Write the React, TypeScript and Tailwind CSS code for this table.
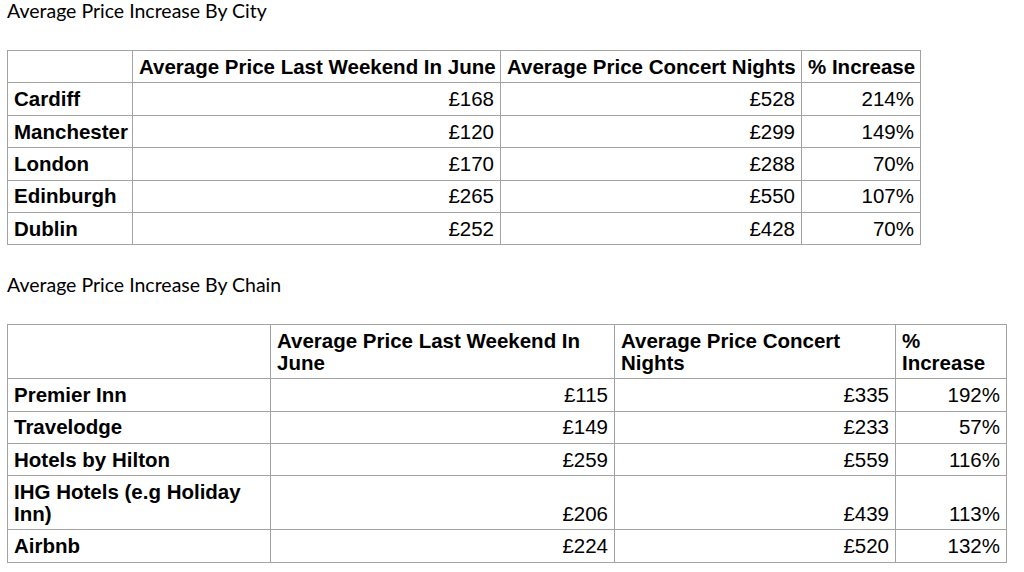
const cities = [
  { name: "Cardiff", june: "£168", concert: "£528", pct: "214%" },
  { name: "Manchester", june: "£120", concert: "£299", pct: "149%" },
  { name: "London", june: "£170", concert: "£288", pct: "70%" },
  { name: "Edinburgh", june: "£265", concert: "£550", pct: "107%" },
  { name: "Dublin", june: "£252", concert: "£428", pct: "70%" },
];

const chains = [
  { name: "Premier Inn", june: "£115", concert: "£335", pct: "192%" },
  { name: "Travelodge", june: "£149", concert: "£233", pct: "57%" },
  { name: "Hotels by Hilton", june: "£259", concert: "£559", pct: "116%" },
  { name: "IHG Hotels (e.g Holiday Inn)", june: "£206", concert: "£439", pct: "113%" },
  { name: "Airbnb", june: "£224", concert: "£520", pct: "132%" },
];

const cell = "border border-[#a3a3a3] px-[6px] py-[4.9px] leading-[21.6px] align-bottom";
const title = "text-[19.5px] leading-[22px] text-black font-['Lato','Carlito',sans-serif]";
const tableFont = "text-[20.5px] font-['Liberation_Sans',Arial,sans-serif]";

export default function App() {
  return (
    <div className="min-h-[572px] bg-white pl-[7px] text-black">
      <p className={title}>Average Price Increase By City</p>

      <table className={`mt-[28px] w-[913px] table-fixed border-collapse ${tableFont}`}>
        <colgroup>
          <col className="w-[125px]" />
          <col className="w-[368px]" />
          <col className="w-[301px]" />
          <col className="w-[119px]" />
        </colgroup>
        <thead>
          <tr className="font-bold">
            <th className={cell}></th>
            <th className={`${cell} text-left whitespace-nowrap`}>Average Price Last Weekend In June</th>
            <th className={`${cell} text-left whitespace-nowrap`}>Average Price Concert Nights</th>
            <th className={`${cell} text-left whitespace-nowrap`}>% Increase</th>
          </tr>
        </thead>
        <tbody>
          {cities.map((c) => (
            <tr key={c.name}>
              <td className={`${cell} font-bold whitespace-nowrap`}>{c.name}</td>
              <td className={`${cell} text-right`}>{c.june}</td>
              <td className={`${cell} text-right`}>{c.concert}</td>
              <td className={`${cell} text-right`}>{c.pct}</td>
            </tr>
          ))}
        </tbody>
      </table>

      <p className={`${title} mt-[29px]`}>Average Price Increase By Chain</p>

      <table className={`mt-[28px] w-[999px] table-fixed border-collapse ${tableFont}`}>
        <colgroup>
          <col className="w-[263px]" />
          <col className="w-[344px]" />
          <col className="w-[281px]" />
          <col className="w-[111px]" />
        </colgroup>
        <thead>
          <tr className="font-bold">
            <th className={cell}></th>
            <th className={`${cell} text-left`}>Average Price Last Weekend In June</th>
            <th className={`${cell} text-left`}>Average Price Concert Nights</th>
            <th className={`${cell} text-left`}>% Increase</th>
          </tr>
        </thead>
        <tbody>
          {chains.map((c) => (
            <tr key={c.name}>
              <td className={`${cell} font-bold`}>{c.name}</td>
              <td className={`${cell} text-right`}>{c.june}</td>
              <td className={`${cell} text-right`}>{c.concert}</td>
              <td className={`${cell} text-right`}>{c.pct}</td>
            </tr>
          ))}
        </tbody>
      </table>
    </div>
  );
}
